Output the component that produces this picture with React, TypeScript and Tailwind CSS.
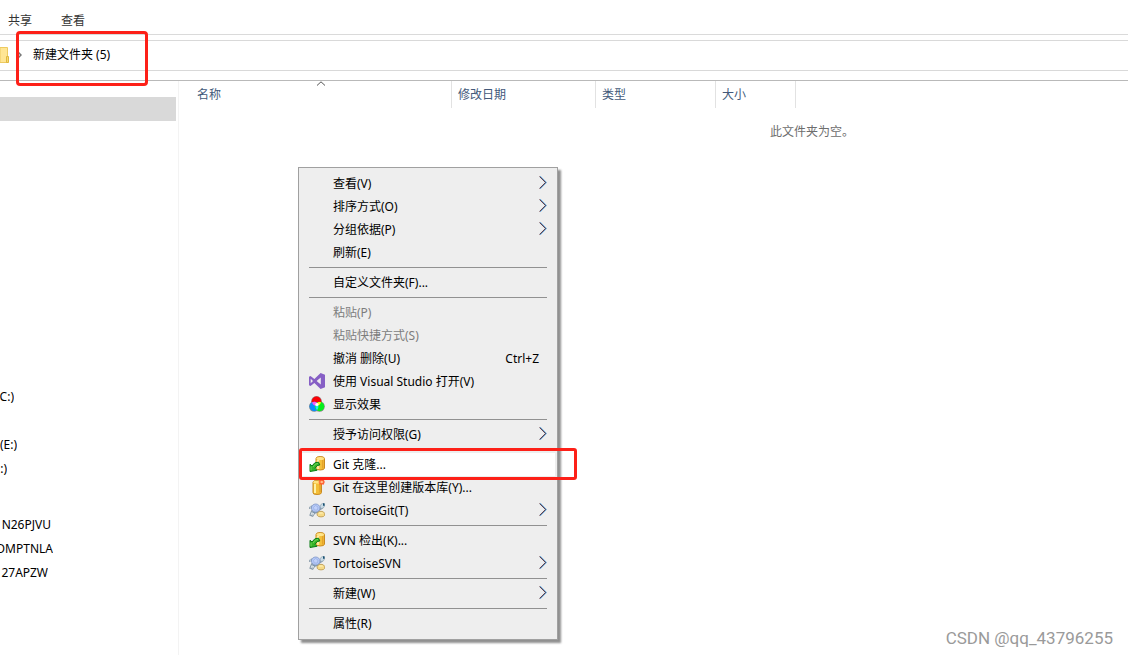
import type { ReactNode } from "react";

function VisualStudioIcon() {
  return (
    <svg viewBox="0 0 16 16" className="size-4" aria-hidden="true">
      <path
        fill="#865fc5"
        fillRule="evenodd"
        d="M11.6 0 16 1.8v12.4L11.6 16 5.4 9.9 1.5 13 0 12.200V3.800L1.500 3l3.900 3.100L11.600 0ZM11.800 4.600 7.600 8l4.200 3.400V4.600ZM1.700 5.700v4.600L4 8 1.700 5.700Z"
      />
    </svg>
  );
}

function ColorIcon() {
  return (
    <svg viewBox="0 0 16 16" className="size-4" aria-hidden="true">
      <g fill="#8d8d8d">
        <circle cx="7.500" cy="5.300" r="5.300" />
        <circle cx="5.200" cy="10.500" r="5.200" />
        <circle cx="10.600" cy="10.500" r="5.200" />
      </g>
      <circle cx="7.500" cy="5.300" r="4.800" fill="#fb0207" />
      <circle cx="5.200" cy="10.500" r="4.700" fill="#0a8dfb" />
      <circle cx="10.600" cy="10.500" r="4.700" fill="#05ee1c" />
      <path d="M3 6.500Q6.500 5 8 7L7.500 9.700Q4.500 10 3 6.500Z" fill="#f45cf5" />
      <path d="M8 7Q9.500 5.500 12 6.200Q11 9.500 8 9.700Z" fill="#fff313" />
      <path d="M7.800 7.500Q11 10.500 8 14.200Q5 11 7.800 7.500Z" fill="#20e9ed" />
      <circle cx="7.900" cy="8.500" r="1.600" fill="#fff" />
    </svg>
  );
}

function CheckoutIcon() {
  return (
    <svg viewBox="0 0 16 16" className="size-4" aria-hidden="true">
      <path d="M7 2.500Q7 .5 11.200 .5T15.500 2.500V12Q15.500 14 11.200 14T7 12Z" fill="#f4c03b" stroke="#c88a22" />
      <path d="M9 4v9" stroke="#ffeaa0" strokeWidth="2.500" />
      <path d="M13.700 4v8.500" stroke="#e5a32c" strokeWidth="1.500" />
      <ellipse cx="11.200" cy="2.600" rx="3.700" ry="1.500" fill="#ffe58b" />
      <path
        d="M1 8.300 3 10Q5.300 5.600 9.600 6.200L10.800 9Q7.800 8.700 6 12.200L8 14.300 1 15.500Z"
        fill="#35b529"
        stroke="#087a13"
        strokeLinejoin="round"
      />
      <path d="M2 10.500v3.800M4 11Q6 7.300 9 7.300" fill="none" stroke="#6fd453" />
    </svg>
  );
}

function CreateRepositoryIcon() {
  return (
    <svg viewBox="0 0 16 16" className="size-4" aria-hidden="true">
      <path d="M4 3Q4 1.500 8 1.500T12.500 3V13.500Q12.500 15.500 8 15.500T4 13.500Z" fill="#f4bd36" stroke="#c88a22" />
      <path d="M6 5v9" stroke="#fff1a3" strokeWidth="2" />
      <path d="M11 5v8.500" stroke="#e3a02a" strokeWidth="1.500" />
      <ellipse cx="8" cy="3.200" rx="3.800" ry="1.400" fill="#ffe17e" />
      <path d="M12.700 0v6M9.700 3h6M10.500 .8l4.400 4.400M14.900 .8l-4.400 4.400" stroke="#ff592b" strokeWidth="1.400" />
      <circle cx="12.700" cy="3" r="1.300" fill="#ffc18a" />
    </svg>
  );
}

function TortoiseIcon() {
  return (
    <svg viewBox="0 0 16 16" className="size-4" aria-hidden="true">
      <path
        d="M2.500 4.500.5 6M3 9l-1.500 4 2 .8 2-3M10 8l3-2"
        fill="none"
        stroke="#8a9baa"
        strokeWidth="2"
        strokeLinecap="round"
      />
      <path d="M1.800 4.800 1 5.500M3 10.500l-.7 2M4.800 11l-1 2" stroke="#e2edf2" strokeLinecap="round" />
      <path d="M11.200 4.800Q11.500 1.800 13.500 1.500T15.500 4Q15 6.500 12 6.500Z" fill="#c9dbe6" stroke="#8ea3b1" strokeWidth=".7" />
      <path d="M14 1.300h1.600v2.500H14Z" fill="#174f70" />
      <ellipse cx="6.700" cy="6" rx="4.300" ry="4" fill="#b3c7f6" stroke="#7f95c7" strokeWidth=".8" />
      <path d="M4.500 5.500 6.500 3.500 9 5 8.300 8 5.300 8Z" fill="#bfd0fb" stroke="#93a9dd" strokeWidth=".6" />
      <path d="M3.500 9.700Q6.500 12 10 9.500" fill="none" stroke="#7d94ac" strokeWidth="1.200" />
      <path d="M8.200 11.300Q9.300 9.300 12 9.300T15.700 11.300V13.300Q15 14.900 12 14.900T8.200 13.300Z" fill="#f7da86" stroke="#b8954a" strokeWidth=".8" />
      <path d="M9.800 11h4" stroke="#fff5bf" />
    </svg>
  );
}

function Chevron() {
  return (
    <svg viewBox="0 0 8 13" className="h-[13px] w-2 -translate-y-px" fill="none" aria-hidden="true">
      <path d="M1 .5 7 6.500 1 12.500" stroke="#3f8fcd" strokeWidth="1.200" />
      <path d="M.5 .5 6.500 6.500 .5 12.500" stroke="#6e3434" strokeWidth=".9" />
    </svg>
  );
}

type Item = {
  label: string;
  icon?: ReactNode;
  submenu?: boolean;
  shortcut?: string;
  disabled?: boolean;
  highlighted?: boolean;
};

const groups: Item[][] = [
  [
    { label: "查看(V)", submenu: true },
    { label: "排序方式(O)", submenu: true },
    { label: "分组依据(P)", submenu: true },
    { label: "刷新(E)" },
  ],
  [{ label: "自定义文件夹(F)..." }],
  [
    { label: "粘贴(P)", disabled: true },
    { label: "粘贴快捷方式(S)", disabled: true },
    { label: "撤消 删除(U)", shortcut: "Ctrl+Z" },
    { label: "使用 Visual Studio 打开(V)", icon: <VisualStudioIcon /> },
    { label: "显示效果", icon: <ColorIcon /> },
  ],
  [{ label: "授予访问权限(G)", submenu: true }],
  [
    { label: "Git 克隆...", icon: <CheckoutIcon />, highlighted: true },
    { label: "Git 在这里创建版本库(Y)...", icon: <CreateRepositoryIcon /> },
    { label: "TortoiseGit(T)", icon: <TortoiseIcon />, submenu: true },
  ],
  [
    { label: "SVN 检出(K)...", icon: <CheckoutIcon /> },
    { label: "TortoiseSVN", icon: <TortoiseIcon />, submenu: true },
  ],
  [{ label: "新建(W)", submenu: true }],
  [{ label: "属性(R)" }],
];

function MenuItem({ item }: { item: Item }) {
  return (
    <button
      type="button"
      role="menuitem"
      disabled={item.disabled}
      className={`flex h-[23px] w-full items-center px-2 text-left whitespace-nowrap ${
        item.highlighted ? "bg-white" : ""
      } ${item.disabled ? "text-[#7d7d7d]" : "text-black"}`}
    >
      <span className="mt-[3px] mr-2 size-4 shrink-0 self-start">{item.icon}</span>
      <span className="flex-1">{item.label}</span>
      {item.shortcut && <span className="pr-2">{item.shortcut}</span>}
      {item.submenu && <Chevron />}
    </button>
  );
}

function ContextMenu() {
  return (
    <div
      role="menu"
      className="absolute top-[167px] left-[298px] w-[260px] border border-[#a0a0a0] bg-[#eeeeee] px-0.5 py-1 shadow-[3px_3px_2px_#909090]"
    >
      {groups.map((group, i) => (
        <div key={i}>
          {i > 0 && (
            <div role="separator" className="px-2 py-[3px]">
              <div className="h-px bg-[#919191]" />
            </div>
          )}
          {group.map((item) => (
            <MenuItem key={item.label} item={item} />
          ))}
        </div>
      ))}
    </div>
  );
}

function Sidebar() {
  const row = "flex h-6 items-center justify-end overflow-hidden whitespace-nowrap";
  return (
    <nav aria-label="导航窗格" className="w-[179px] shrink-0 border-r border-[#f3f3f3] pt-4">
      <div className="mr-0.5 h-6 bg-[#d9d9d9]" />
      <div className="pt-[264px]">
        <div className={`${row} w-3.5`}>C:)</div>
        <div className="h-6" />
        <div className={`${row} w-[17px]`}>(E:)</div>
        <div className={`${row} w-[7px]`}>:)</div>
      </div>
      <div className="pt-8">
        <div className={`${row} w-[51px]`}>N26PJVU</div>
        <div className={`${row} w-[53px]`}>DMPTNLA</div>
        <div className={`${row} w-12`}>27APZW</div>
      </div>
    </nav>
  );
}

function FileList() {
  const head = "border-r border-[#e2e2e2] pl-1.5 text-left font-normal";
  return (
    <main className="min-w-0 flex-1 pl-3">
      <table className="w-full table-fixed border-separate border-spacing-0">
        <colgroup>
          <col className="w-[261px]" />
          <col className="w-36" />
          <col className="w-[120px]" />
          <col className="w-20" />
          <col />
        </colgroup>
        <thead>
          <tr className="h-[27px] text-[#43597a]">
            <th className={`${head} relative`}>
              名称
              <svg
                viewBox="0 0 9 5"
                className="absolute top-0 left-1/2 h-[5px] w-[9px] -translate-x-1/2"
                fill="none"
                stroke="#555"
                aria-hidden="true"
              >
                <path d="M.5 4.500 4.500 .8 8.500 4.500" />
              </svg>
            </th>
            <th className={head}>修改日期</th>
            <th className={head}>类型</th>
            <th className={head}>大小</th>
            <th />
          </tr>
        </thead>
        <tbody>
          <tr className="h-12 text-[#6d6d6d]">
            <td colSpan={3} />
            <td colSpan={2} className="pl-[54px] whitespace-nowrap">
              此文件夹为空。
            </td>
          </tr>
        </tbody>
      </table>
    </main>
  );
}

export default function App() {
  return (
    <div className="relative flex min-h-screen flex-col overflow-hidden bg-white font-['Noto_Sans','Noto_Sans_CJK_SC',sans-serif] text-[12px] leading-4 text-black">
      <header>
        <div className="flex h-[35px] items-center gap-[29px] border-b border-[#dadada] pt-2 pl-2 text-[#333]">
          <button type="button">共享</button>
          <button type="button">查看</button>
        </div>
        <div className="h-[46px] border-b border-[#b9b9b9] pt-[5px]">
          <div className="flex h-[31px] items-center border-y border-[#d9d9d9] pb-px">
            <svg viewBox="0 0 9 16" className="h-4 w-[9px]" aria-hidden="true">
              <path d="M0 .5h7.500v15H0Z" fill="#ffe695" stroke="#edca60" />
              <path d="M6.500 9.500h2v6h-2Z" fill="#f7d976" stroke="#dfb83e" />
            </svg>
            <svg viewBox="0 0 5 8" className="ml-2 h-2 w-[5px]" fill="none" stroke="#777" strokeWidth="1.500" aria-hidden="true">
              <path d="M.5 .5 4 4 .5 7.500" />
            </svg>
            <span className="pl-[11px]">新建文件夹 (5)</span>
          </div>
        </div>
      </header>
      <div className="flex flex-1">
        <Sidebar />
        <FileList />
      </div>
      <ContextMenu />
      <div className="absolute top-[31px] left-4 h-[55px] w-[132px] rounded-[4px] border-3 border-[#fd2018]" />
      <div className="absolute top-[448px] left-[299px] h-8 w-[278px] rounded-[3px] border-3 border-[#fd2018]" />
      <div className="absolute right-[15px] bottom-[7px] font-['Roboto',sans-serif] text-[17px] leading-5 text-[#9a9a9a]">
        CSDN @qq_43796255
      </div>
    </div>
  );
}
